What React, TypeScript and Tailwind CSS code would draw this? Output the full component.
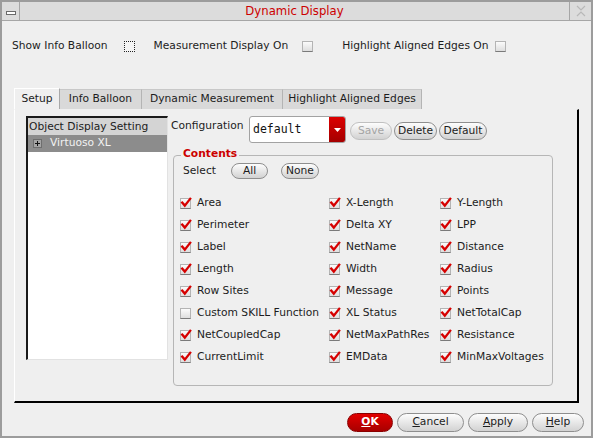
import type { ReactNode } from 'react';

const ROWS: [string, boolean][][] = [
  [['Area', true], ['X-Length', true], ['Y-Length', true]],
  [['Perimeter', true], ['Delta XY', true], ['LPP', true]],
  [['Label', true], ['NetName', true], ['Distance', true]],
  [['Length', true], ['Width', true], ['Radius', true]],
  [['Row Sites', true], ['Message', true], ['Points', true]],
  [['Custom SKILL Function', false], ['XL Status', true], ['NetTotalCap', true]],
  [['NetCoupledCap', true], ['NetMaxPathRes', true], ['Resistance', true]],
  [['CurrentLimit', true], ['EMData', true], ['MinMaxVoltages', true]],
];

const TABS = [
  { label: 'Setup', w: 'w-[46px]' },
  { label: 'Info Balloon', w: 'w-[82px]' },
  { label: 'Dynamic Measurement', w: 'w-[141px]' },
  { label: 'Highlight Aligned Edges', w: 'w-[139px]' },
];

function Check({ checked, focus, className = '' }: { checked?: boolean; focus?: boolean; className?: string }) {
  return (
    <span
      className={`relative inline-block h-[11px] w-[11px] shrink-0 ${
        focus
          ? 'border border-dotted border-[#222] bg-[#f4f4f4]'
          : 'border border-[#b4b4b4] border-b-[#7a7a7a] bg-linear-to-b from-[#fbfbfb] to-[#dedede]'
      } ${className}`}
    >
      {checked && (
        <svg className="absolute left-[-1px] top-[-2px] overflow-visible" width="12" height="12" viewBox="0 0 12 12">
          <path d="M2.2 5.6 L4.8 8.6 L10.2 1.8" stroke="#d60000" strokeWidth="2.3" fill="none" strokeLinecap="square" />
        </svg>
      )}
    </span>
  );
}

function Pill({
  children,
  className = '',
  disabled,
}: {
  children: ReactNode;
  className?: string;
  disabled?: boolean;
}) {
  return (
    <button
      className={`flex items-center justify-center rounded-full border bg-linear-to-b from-[#fdfdfd] to-[#d2d2d2] leading-none ${
        disabled ? 'border-[#c0c0c0] text-[#a4a4a4]' : 'border-[#8e8e8e] text-[#1c1c1c]'
      } ${className}`}
    >
      {children}
    </button>
  );
}

export default function App() {
  return (
    <div className="flex h-[438px] w-[593px] flex-col overflow-hidden border-2 border-[#9c9c9c] bg-[#efefef] font-['DejaVu_Sans',sans-serif] text-[10.7px] text-[#1c1c1c]">
      {/* Title bar */}
      <div className="flex h-[19px] shrink-0 border-b border-[#a6a6a6] bg-[#dcdcdc]">
        <div className="flex w-[18px] items-center justify-center border-r border-[#a6a6a6]">
          <span className="mt-[3px] h-[4px] w-[10px] border border-[#6a6a6a] bg-white" />
        </div>
        <div className="flex-1 text-center text-[11.7px] leading-[18px] text-[#cc0000]">Dynamic Display</div>
        <div className="flex w-[22px] items-center justify-center border-l border-[#a6a6a6]">
          <svg width="10" height="12" viewBox="0 0 10 12">
            <path d="M1 1 L5 5 L9 1 M1 11 L5 7 L9 11" stroke="#b8b8b8" strokeWidth="1.2" fill="none" />
          </svg>
        </div>
      </div>

      {/* Toggles */}
      <div className="mt-[17px] flex h-[16px] items-center pl-[10px]">
        <span>Show Info Balloon</span>
        <Check focus className="ml-[16px]" />
        <span className="ml-[19px]">Measurement Display On</span>
        <Check className="ml-[14px]" />
        <span className="ml-[29px]">Highlight Aligned Edges On</span>
        <Check className="ml-[6px]" />
      </div>

      {/* Tabs */}
      <div className="mx-[12px] mt-[34px] flex h-[21px] items-end">
        {TABS.map((tab, i) =>
          i === 0 ? (
            <div
              key={tab.label}
              className={`${tab.w} flex h-[21px] items-center justify-center border-l border-t border-r border-l-white border-t-white border-r-[#a8a8a8] bg-[#efefef]`}
            >
              {tab.label}
            </div>
          ) : (
            <div
              key={tab.label}
              className={`${tab.w} flex h-[20px] items-center justify-center border-t border-r border-[#b4b4b4] border-t-[#c8c8c8] bg-[#d9d9d9]`}
            >
              {tab.label}
            </div>
          )
        )}
      </div>

      {/* Panel */}
      <div className="mx-[12px] flex h-[294px] shrink-0 border-l border-t border-l-white border-t-[#efefef] border-r-2 border-b-2 border-r-black border-b-black pl-[11px] pt-[6px]">
        {/* Tree list */}
        <div className="flex h-[244px] w-[142px] flex-col border-l-2 border-t-2 border-l-[#1a1a1a] border-t-[#1a1a1a] border-r border-b border-r-[#e2e2e2] border-b-[#e2e2e2] bg-white">
          <div className="h-[17px] bg-[#d4d4d4] pl-[1px] leading-[17px]">Object Display Setting</div>
          <div className="flex h-[17px] items-center bg-[#8c8c8c] text-[#f2f2f2]">
            <svg className="ml-[5px]" width="9" height="9" viewBox="0 0 9 9">
              <rect x="0.5" y="0.5" width="8" height="8" fill="#a4a4a4" stroke="#6e6e6e" />
              <path d="M2 4.5 H7 M4.5 2 V7" stroke="#111" strokeWidth="1" />
            </svg>
            <span className="ml-[8px]">Virtuoso XL</span>
          </div>
        </div>

        {/* Right side */}
        <div className="ml-[2px] flex flex-col">
          <div className="flex h-[27px] items-start">
            <span className="w-[79px] pl-[1px] leading-[20px]">Configuration</span>
            <div className="flex h-[27px] w-[97px] overflow-hidden rounded-[3px] border border-[#a2a2a2] bg-white">
              <span className="flex-1 pl-[3px] font-['DejaVu_Sans_Mono',monospace] text-[11.5px] leading-[25px] text-[#111]">
                default
              </span>
              <span className="flex w-[16px] items-center justify-center bg-linear-to-b from-[#dc0000] to-[#a40000]">
                <svg width="7" height="4" viewBox="0 0 7 4">
                  <path d="M0 0 H7 L3.5 4 Z" fill="#fff" />
                </svg>
              </span>
            </div>
            <Pill disabled className="ml-[4px] mt-[6px] h-[18px] w-[42px]">
              Save
            </Pill>
            <Pill className="ml-[2px] mt-[6px] h-[18px] w-[43px]">Delete</Pill>
            <Pill className="ml-[2px] mt-[6px] h-[18px] w-[48px]">Default</Pill>
          </div>

          {/* Contents group */}
          <div className="relative ml-[3px] mt-[12px] h-[231px] w-[380px] rounded-[4px] border border-[#b6b6b6]">
            <span className="absolute left-[7px] top-[-9px] bg-[#efefef] px-[2px] font-bold leading-[13px] text-[#cc0000]">
              Contents
            </span>
            <div className="mt-[7px] flex h-[16px] items-center pl-[9px]">
              <span className="w-[48px]">Select</span>
              <Pill className="h-[16px] w-[37px]">All</Pill>
              <Pill className="ml-[13px] h-[16px] w-[38px]">None</Pill>
            </div>
            <div className="mt-[13px] grid grid-cols-[149px_111px_1fr] pl-[6px]">
              {ROWS.flat().map(([label, checked]) => (
                <div key={label} className="flex h-[22px] items-center">
                  <Check checked={checked} />
                  <span className="ml-[6px]">{label}</span>
                </div>
              ))}
            </div>
          </div>
        </div>
      </div>

      {/* Dialog buttons */}
      <div className="mr-[7px] mt-[10px] flex justify-end gap-[4px]">
        <button className="h-[19px] w-[46px] rounded-full border border-[#8a0000] bg-linear-to-b from-[#e20000] to-[#a80000] font-bold leading-none text-white">
          <span className="underline">O</span>K
        </button>
        <Pill className="h-[19px] w-[67px]">
          <span className="underline">C</span>ancel
        </Pill>
        <Pill className="h-[19px] w-[60px]">
          <span className="underline">A</span>pply
        </Pill>
        <Pill className="h-[19px] w-[52px]">
          <span className="underline">H</span>elp
        </Pill>
      </div>
    </div>
  );
}
